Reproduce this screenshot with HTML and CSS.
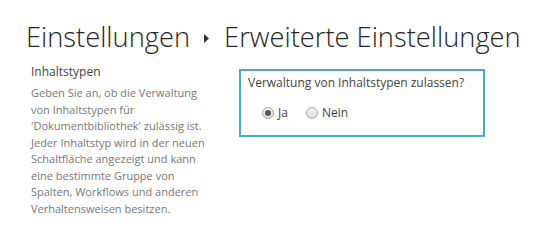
FILE: index.html
```html
<!DOCTYPE html>
<html lang="de">
<head>
<meta charset="utf-8">
<title>Erweiterte Einstellungen</title>
<link rel="stylesheet" href="styles.css">
</head>
<body>
<div class="page">
  <h1 class="title"><span>Einstellungen</span><svg class="crumb" width="6" height="9" viewBox="0 0 6 9"><polygon points="0,0 5,4.5 0,9" fill="#333"/></svg><span>Erweiterte Einstellungen</span></h1>
  <div class="section">
    <div class="desc">
      <h2 class="desc-title">Inhaltstypen</h2>
      <p class="desc-text">Geben Sie an, ob die Verwaltung von Inhaltstypen für 'Dokumentbibliothek' zulässig ist. Jeder Inhaltstyp wird in der neuen Schaltfläche angezeigt und kann eine bestimmte Gruppe von Spalten, Workflows und anderen Verhaltensweisen besitzen.</p>
    </div>
    <div class="box">
      <div class="question">Verwaltung von Inhaltstypen zulassen?</div>
      <div class="options">
        <label class="opt"><span class="radio checked"></span>Ja</label>
        <label class="opt"><span class="radio"></span>Nein</label>
      </div>
    </div>
  </div>
</div>
</body>
</html>
```
FILE: styles.css
```css
html, body {
  margin: 0;
  padding: 0;
  background: #ffffff;
}
.page {
  padding: 19px 0 0 26px;
  font-family: "Open Sans", "Noto Sans", sans-serif;
}
.title {
  margin: 0;
  font-weight: 300;
  font-size: 27.3px;
  line-height: 36px;
  color: #262626;
  display: flex;
  align-items: center;
  white-space: nowrap;
}
.crumb {
  margin: 2px 14px 0 14px;
}
.section {
  display: flex;
  align-items: flex-start;
  margin-top: 9px;
}
.desc {
  width: 180px;
  padding-left: 5px;
}
.desc-title {
  margin: 0;
  font-size: 12px;
  font-weight: 400;
  color: #444;
  line-height: 16px;
}
.desc-text {
  margin: 5px 0 0 0;
  font-size: 11px;
  line-height: 16.5px;
  color: #777;
}
.box {
  margin: 5px 0 0 28px;
  width: 235px;
  height: 64px;
  border: 2px solid #4aa8cc;
  padding: 0 0 0 7px;
}
.question {
  margin-top: 4px;
  font-size: 12px;
  line-height: 16px;
  color: #444;
}
.options {
  display: flex;
  margin: 14px 0 0 14px;
  gap: 18px;
}
.opt {
  display: flex;
  align-items: center;
  font-size: 12px;
  color: #444;
  line-height: 16px;
}
.radio {
  box-sizing: border-box;
  width: 12px;
  height: 12px;
  border-radius: 50%;
  border: 1px solid #a9a9a9;
  background: linear-gradient(#f2f2f2, #dcdcdc);
  margin-right: 4px;
  position: relative;
}
.radio.checked::after {
  content: "";
  position: absolute;
  left: 2px;
  top: 2px;
  width: 6px;
  height: 6px;
  border-radius: 50%;
  background: #555;
}
```
